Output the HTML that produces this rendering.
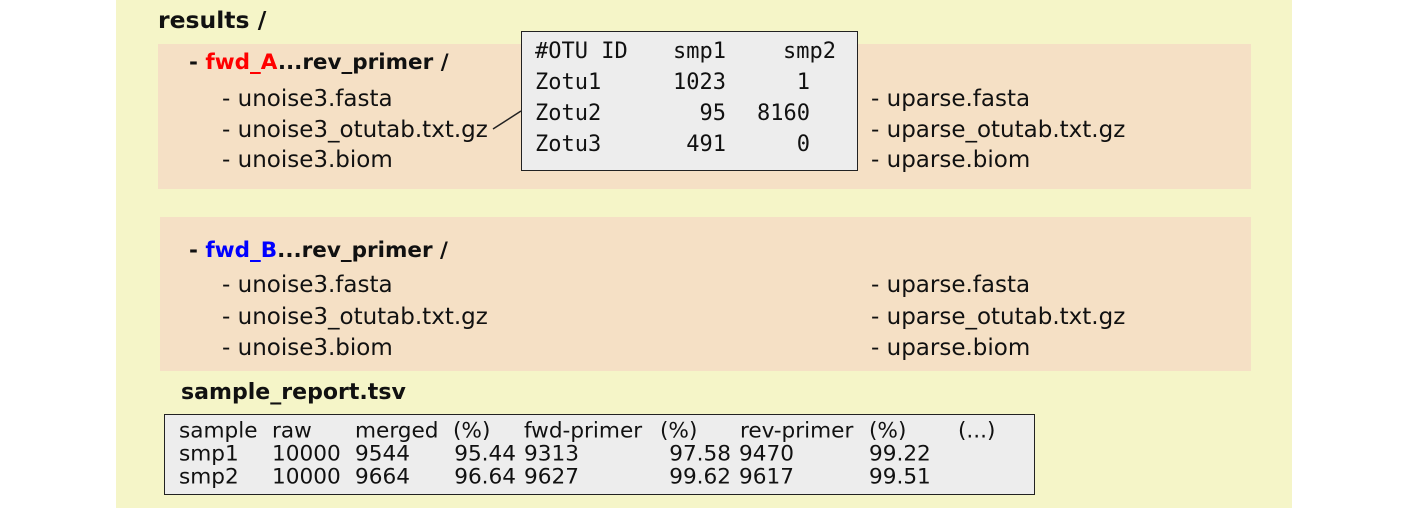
<!DOCTYPE html>
<html><head><meta charset="utf-8"><style>
body{margin:0;width:1417px;height:508px;background:#fff;position:relative;overflow:hidden;font-family:"DejaVu Sans","Liberation Sans",sans-serif;}
.a{position:absolute;white-space:pre;line-height:1;}
.t{font-size:23px;color:#111;}
.b{font-weight:bold;}
.m{font-family:"DejaVu Sans Mono","Liberation Mono",monospace;font-size:22px;color:#111;}
.c{font-family:"DejaVu Sans Condensed","DejaVu Sans",sans-serif;font-size:24px;color:#111;transform:scaleY(0.88);transform-origin:0 0;}
.r{text-align:right;}
.r.c{transform-origin:100% 0;}
</style></head><body>
<div class="a" style="left:116px;top:0;width:1176px;height:508px;background:#f5f5c8"></div>
<div class="a" style="left:158px;top:44px;width:1093px;height:145px;background:#f5e0c5"></div>
<div class="a" style="left:160px;top:217px;width:1091px;height:154px;background:#f5e0c5"></div>

<div class="a t b" style="left:158px;top:9px;font-size:23.5px">results /</div>
<div class="a t b" style="left:189px;top:52px;font-size:21.5px">- <span style="color:#f00">fwd_A</span>...rev_primer /</div>
<div class="a t" style="left:222px;top:88px">- unoise3.fasta</div>
<div class="a t" style="left:222px;top:119px">- unoise3_otutab.txt.gz</div>
<div class="a t" style="left:222px;top:149px">- unoise3.biom</div>
<div class="a t" style="left:871px;top:88px">- uparse.fasta</div>
<div class="a t" style="left:871px;top:119px">- uparse_otutab.txt.gz</div>
<div class="a t" style="left:871px;top:149px">- uparse.biom</div>

<div class="a t b" style="left:189px;top:240px;font-size:21.5px">- <span style="color:#00f">fwd_B</span>...rev_primer /</div>
<div class="a t" style="left:222px;top:274px">- unoise3.fasta</div>
<div class="a t" style="left:222px;top:306px">- unoise3_otutab.txt.gz</div>
<div class="a t" style="left:222px;top:337px">- unoise3.biom</div>
<div class="a t" style="left:871px;top:274px">- uparse.fasta</div>
<div class="a t" style="left:871px;top:306px">- uparse_otutab.txt.gz</div>
<div class="a t" style="left:871px;top:337px">- uparse.biom</div>

<svg class="a" style="left:0;top:0" width="1417" height="508"><line x1="493" y1="129" x2="521" y2="111" stroke="#222" stroke-width="1.5"/></svg>
<div class="a" style="left:521px;top:31px;width:335px;height:138px;background:#ededed;border:1.5px solid #222"></div>
<div class="a m" style="left:535px;top:41px">#OTU ID</div>
<div class="a m r" style="left:626px;top:41px;width:100px">smp1</div>
<div class="a m r" style="left:736px;top:41px;width:100px">smp2</div>
<div class="a m" style="left:535px;top:72px">Zotu1</div>
<div class="a m r" style="left:626px;top:72px;width:100px">1023</div>
<div class="a m r" style="left:736px;top:72px;width:74px">1</div>
<div class="a m" style="left:535px;top:103px">Zotu2</div>
<div class="a m r" style="left:626px;top:103px;width:100px">95</div>
<div class="a m r" style="left:736px;top:103px;width:74px">8160</div>
<div class="a m" style="left:535px;top:134px">Zotu3</div>
<div class="a m r" style="left:626px;top:134px;width:100px">491</div>
<div class="a m r" style="left:736px;top:134px;width:74px">0</div>

<div class="a t b" style="left:181px;top:381px;font-size:24.5px;font-family:'DejaVu Sans Condensed','DejaVu Sans',sans-serif;transform:scaleY(0.9);transform-origin:0 0">sample_report.tsv</div>
<div class="a" style="left:164px;top:414px;width:869px;height:79px;background:#ededed;border:1.5px solid #222"></div>

<div class="a c" style="left:179px;top:420px">sample</div>
<div class="a c" style="left:272px;top:420px">raw</div>
<div class="a c" style="left:355px;top:420px">merged</div>
<div class="a c" style="left:453px;top:420px">(%)</div>
<div class="a c" style="left:524px;top:420px">fwd-primer</div>
<div class="a c" style="left:660px;top:420px">(%)</div>
<div class="a c" style="left:740px;top:420px">rev-primer</div>
<div class="a c" style="left:869px;top:420px">(%)</div>
<div class="a c" style="left:958px;top:420px">(...)</div>

<div class="a c" style="left:179px;top:443px">smp1</div>
<div class="a c" style="left:272px;top:443px">10000</div>
<div class="a c" style="left:355px;top:443px">9544</div>
<div class="a c r" style="left:416px;top:443px;width:100px">95.44</div>
<div class="a c" style="left:524px;top:443px">9313</div>
<div class="a c r" style="left:631px;top:443px;width:100px">97.58</div>
<div class="a c" style="left:739px;top:443px">9470</div>
<div class="a c" style="left:869px;top:443px">99.22</div>

<div class="a c" style="left:179px;top:466px">smp2</div>
<div class="a c" style="left:272px;top:466px">10000</div>
<div class="a c" style="left:355px;top:466px">9664</div>
<div class="a c r" style="left:416px;top:466px;width:100px">96.64</div>
<div class="a c" style="left:524px;top:466px">9627</div>
<div class="a c r" style="left:631px;top:466px;width:100px">99.62</div>
<div class="a c" style="left:739px;top:466px">9617</div>
<div class="a c" style="left:869px;top:466px">99.51</div>
</body></html>
